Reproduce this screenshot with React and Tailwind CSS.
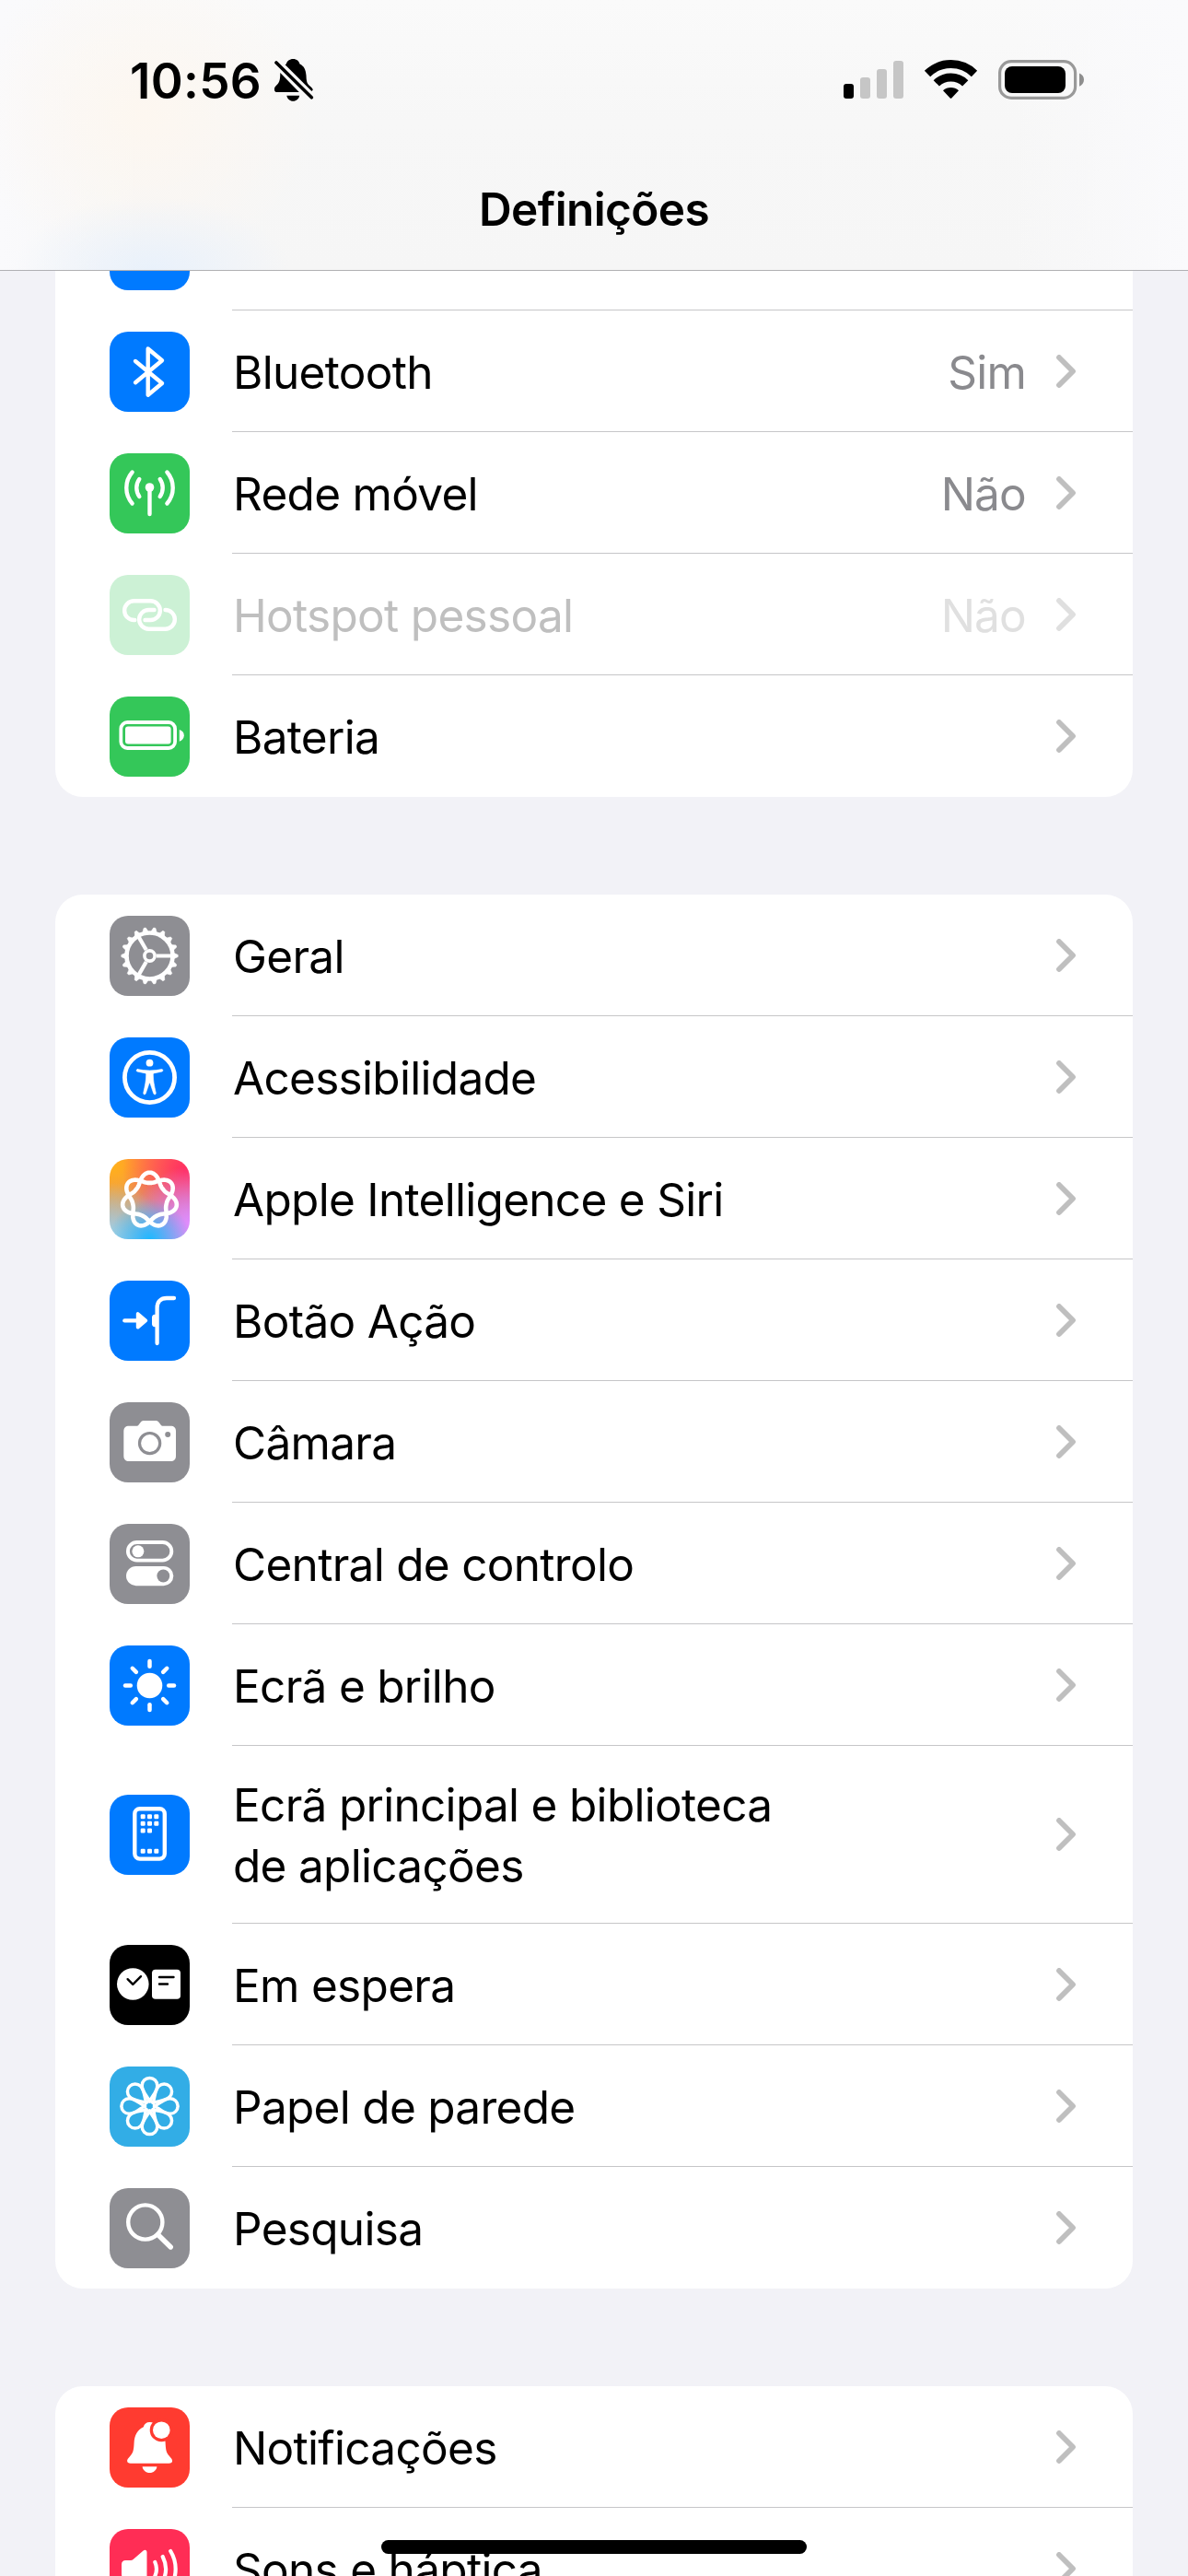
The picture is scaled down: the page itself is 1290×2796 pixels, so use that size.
import clsx from 'clsx';

// seven-lobed knot: the line goes round the centre twice
const knotPath = () => {
  const points = [];
  for (let i = 0; i < 360; i++) {
    const t = (i / 360) * Math.PI * 4;
    const r = 23.2 + 5.6 * Math.cos(3.5 * t) + 1.1 * Math.cos(7 * t);
    const a = t + 0.06 * Math.sin(3.5 * t);
    points.push(`${(43.5 + r * Math.sin(a)).toFixed(2)} ${(44.6 - r * Math.cos(a)).toFixed(2)}`);
  }
  return `M${points.join('L')}Z`;
};

const eighths = [0, 45, 90, 135, 180, 225, 270, 315];
const teeth = Array.from({ length: 18 }, (_, i) => i * 20);

const glyphs = {
  bluetooth: (
    <path d="M28 32 57 56 41.7 68.7V18.5L57 31.2 28 55.2" strokeWidth="4.4" />
  ),
  antenna: (
    <g strokeWidth="4.4">
      <circle cx="43.5" cy="37" r="4.8" fill="white" stroke="none" />
      <path d="M43.5 37V66" />
      <path d="M32.3 28a16.5 16.5 0 0 0 0 19M54.7 28a16.5 16.5 0 0 1 0 19" />
      <path d="M24.6 20.5a26 26 0 0 0 0 34M62.4 20.5a26 26 0 0 1 0 34" />
    </g>
  ),
  link: (
    <g strokeWidth="4.4">
      <path d="M27.3 49H26.5A10.35 10.35 0 0 1 26.5 28.3H44.5A10.35 10.35 0 0 1 44.5 49H38.5" />
      <path d="M60.5 38H60.5A10.35 10.35 0 0 1 60.5 58.7H42.5A10.35 10.35 0 0 1 42.5 38H48.5" />
    </g>
  ),
  battery: (
    <g>
      <rect x="12.3" y="28" width="58.8" height="28" rx="7" strokeWidth="3.8" />
      <rect x="17" y="32.6" width="49.6" height="18.8" rx="3" fill="white" stroke="none" />
      <path d="M75.8 36c3 .8 5 3.2 5 6.3s-2 5.6-5 6.4z" fill="white" stroke="none" />
    </g>
  ),
  gear: (
    <g>
      <circle cx="43.5" cy="43.5" r="25" strokeWidth="4.6" />
      <circle cx="43.5" cy="43.5" r="5.6" strokeWidth="3.6" />
      {[0, 120, 240].map(a => (
        <path key={a} d="M51 43.5H67" strokeWidth="4.2" strokeLinecap="butt" transform={`rotate(${a} 43.5 43.5)`} />
      ))}
      {teeth.map(a => (
        <path key={a} d="M69.5 40.3 74.2 42.4V44.6L69.5 46.7Z" fill="white" strokeWidth="0.6" transform={`rotate(${a} 43.5 43.5)`} />
      ))}
    </g>
  ),
  accessibility: (
    <g>
      <circle cx="43.5" cy="43.5" r="27.1" strokeWidth="4.8" />
      <circle cx="43.5" cy="27.7" r="3.9" fill="white" stroke="none" />
      <path
        d="M30.5 34.6C38 36.4 49 36.4 56.5 34.6 58 34.4 58.4 36.7 57 37.1L48.2 38.9C47.5 39.1 47.3 39.5 47.3 40.2 47.3 47 48.5 52 50.3 60.3 50.5 62.2 48.5 62.6 47.8 61L43.9 49.5H43.1L39.2 61C38.5 62.6 36.5 62.2 36.7 60.3 38.5 52 39.7 47 39.7 40.2 39.7 39.5 39.5 39.1 38.8 38.9L30 37.1C28.6 36.7 29 34.4 30.5 34.6Z"
        fill="white"
        strokeWidth="0.6"
      />
    </g>
  ),
  knot: <path d={knotPath()} strokeWidth="4.6" />,
  action: (
    <g strokeWidth="4.3">
      <path d="M16.3 43.4H31" />
      <path d="M30.6 36V50.8L39.4 43.4Z" fill="white" strokeWidth="3.6" />
      <path d="M51.6 68V29.5C51.6 23 55.5 19 62 19H70" />
      <path d="M50 36.7H49C47 36.7 46 38 46 40V47C46 49 47 50.2 49 50.2H50Z" fill="white" stroke="none" />
    </g>
  ),
  camera: (
    <g>
      <path
        d="M21.3 25.7H29C30.3 25.7 31 25.3 31.8 24.2L33.5 22C34.6 20.6 35.6 20 37.4 20H49.8C51.6 20 52.6 20.6 53.7 22L55.4 24.2C56.2 25.3 56.9 25.7 58.2 25.7H66C70 25.7 72 27.7 72 31.6V58C72 62 70 64 66 64H21.3C17.3 64 15.3 62 15.3 58V31.6C15.3 27.7 17.3 25.7 21.3 25.7Z"
        fill="white"
        stroke="none"
      />
      <circle cx="43.6" cy="44.6" r="11.1" stroke="#8e8e93" strokeWidth="3.2" />
      <circle cx="63.2" cy="34.9" r="3" fill="#8e8e93" stroke="none" />
    </g>
  ),
  toggles: (
    <g>
      <rect x="19.9" y="20" width="47.4" height="19.6" rx="9.8" strokeWidth="3.9" />
      <circle cx="30.9" cy="29.8" r="6.5" fill="white" stroke="none" />
      <rect x="18" y="46" width="51.3" height="21.2" rx="10.6" fill="white" stroke="none" />
      <circle cx="58.3" cy="56.5" r="6.9" fill="#8e8e93" stroke="none" />
    </g>
  ),
  sun: (
    <g>
      <circle cx="43.5" cy="43.5" r="13.8" fill="white" stroke="none" />
      {eighths.map(a => (
        <path key={a} d="M43.5 17V22.8" strokeWidth="4.5" transform={`rotate(${a} 43.5 43.5)`} />
      ))}
    </g>
  ),
  homescreen: (
    <g>
      <rect x="27.3" y="15.2" width="32.5" height="54.4" rx="5.5" strokeWidth="4.4" />
      {[[36.2, 23.7], [43.5, 23.7], [50.8, 23.7], [36.2, 31.3], [43.5, 31.3], [50.8, 31.3], [36.2, 39], [43.5, 39], [36.2, 61.3], [43.5, 61.3], [50.8, 61.3]].map(([x, y]) => (
        <rect key={`${x}-${y}`} x={x - 2.5} y={y - 2.5} width="5" height="5" rx="1.2" fill="white" stroke="none" />
      ))}
    </g>
  ),
  standby: (
    <g>
      <circle cx="25.3" cy="42.5" r="17.3" fill="white" stroke="none" />
      <path d="M19.6 37.2 25.3 42.8 34 34.2" stroke="black" strokeWidth="2.4" />
      <rect x="46" y="26.8" width="31" height="32" rx="3.8" fill="white" stroke="none" />
      <path d="M54 35H69.5M54 42.5H63" stroke="black" strokeWidth="2.4" />
    </g>
  ),
  flower: (
    <g strokeWidth="3.5">
      {eighths.map(a => (
        <path
          key={a}
          d="M43.5 38C41 32 35.2 27.5 35.2 20.7A8.3 8.3 0 0 1 51.8 20.7C51.8 27.5 46 32 43.5 38"
          transform={`rotate(${a} 43.5 43)`}
        />
      ))}
      <circle cx="43.5" cy="43" r="5" strokeWidth="2.4" />
    </g>
  ),
  search: (
    <g>
      <circle cx="38.8" cy="37" r="18.6" strokeWidth="4.4" />
      <path d="M52.5 50.5 66.3 64" strokeWidth="5.4" />
    </g>
  ),
  bell: (
    <g stroke="none" fill="white">
      <path d="M43.6 16C40 16 37.5 18 36.8 21.2 30.5 24 27 30 26.6 38 26.2 47 25.5 49 22.6 52.5 20 55.5 19.1 56.6 19.1 58 19.1 60 20.5 60.7 22.7 60.7H64.5C66.7 60.7 68.1 60 68.1 58 68.1 56.6 67.2 55.5 64.6 52.5 61.7 49 61 47 60.6 38 60.2 30 56.7 24 50.4 21.2 49.7 18 47.2 16 43.6 16Z" />
      <path d="M35.6 64.2H51.4C51 68 47.6 71 43.5 71S36 68 35.6 64.2Z" />
      <circle cx="56.3" cy="24.7" r="12.6" fill="#ff3b30" />
      <circle cx="56.3" cy="24.7" r="9.3" />
    </g>
  ),
  speaker: (
    <g strokeWidth="4.2">
      <path d="M17.5 34H23C24 34 24.8 33.7 25.6 33L36 24C38.5 22 40.5 22.7 40.5 25.5V62C40.5 64.5 38.5 65.5 36 63.5L25.6 54.5C24.8 53.8 24 53.5 23 53.5H17.5C14.5 53.5 13 52 13 49V38.5C13 35.5 14.5 34 17.5 34Z" fill="white" stroke="none" />
      <path d="M49.3 36C51.3 40.5 51.3 46.5 49.3 51M57.7 30C62 38.5 62 48.5 57.7 57M66.2 24C73.5 36 73.5 51 66.2 63" />
    </g>
  ),
};

const groups = [
  [
    { label: 'Bluetooth', icon: 'bluetooth', bg: 'bg-[#007aff]', value: 'Sim' },
    { label: 'Rede móvel', icon: 'antenna', bg: 'bg-[#34c759]', value: 'Não' },
    { label: 'Hotspot pessoal', icon: 'link', bg: 'bg-[#ccf1d5]', value: 'Não', disabled: true },
    { label: 'Bateria', icon: 'battery', bg: 'bg-[#34c759]' },
  ],
  [
    { label: 'Geral', icon: 'gear', bg: 'bg-[#8e8e93]' },
    { label: 'Acessibilidade', icon: 'accessibility', bg: 'bg-[#007aff]' },
    {
      label: 'Apple Intelligence e Siri',
      icon: 'knot',
      bg: 'bg-[radial-gradient(circle_at_50%_100%,#1fb8ff_0%,#1fb8ff00_45%),radial-gradient(circle_at_100%_80%,#e08cff_0%,#e08cff00_55%),radial-gradient(circle_at_0%_100%,#a0d4e6_0%,#a0d4e600_50%),radial-gradient(circle_at_95%_15%,#ff2d62_0%,#ff2d6200_62%),radial-gradient(circle_at_5%_10%,#ffb01c_0%,#ffb01c00_70%),linear-gradient(#ff7a58_10%,#c090a4_50%,#a8a8d0)]',
    },
    { label: 'Botão Ação', icon: 'action', bg: 'bg-[#007aff]' },
    { label: 'Câmara', icon: 'camera', bg: 'bg-[#8e8e93]' },
    { label: 'Central de controlo', icon: 'toggles', bg: 'bg-[#8e8e93]' },
    { label: 'Ecrã e brilho', icon: 'sun', bg: 'bg-[#007aff]' },
    { label: 'Ecrã principal e biblioteca de aplicações', icon: 'homescreen', bg: 'bg-[#007aff]', tall: true },
    { label: 'Em espera', icon: 'standby', bg: 'bg-black' },
    { label: 'Papel de parede', icon: 'flower', bg: 'bg-[#32ade6]' },
    { label: 'Pesquisa', icon: 'search', bg: 'bg-[#8e8e93]' },
  ],
  [
    { label: 'Notificações', icon: 'bell', bg: 'bg-[#ff3b30]' },
    { label: 'Sons e háptica', icon: 'speaker', bg: 'bg-[#ff2d55]' },
  ],
];

const Chevron = ({ disabled }) => (
  <svg width="21" height="36" viewBox="0 0 21 36" fill="none" className={disabled ? 'text-[#dfdfdf]' : 'text-[#bfbfbf]'}>
    <path d="M3 3 18 18 3 33" stroke="currentColor" strokeWidth="5.8" strokeLinecap="round" strokeLinejoin="round" />
  </svg>
);

const Row = ({ item, last }) => (
  <div className={clsx('flex pl-[59px]', item.tall ? 'h-[193px]' : 'h-[132px]')}>
    <div className={clsx('flex items-center', !item.tall && 'pt-px')}>
      <div className={clsx('w-[87px] h-[87px] rounded-[20px] overflow-hidden', item.bg)}>
        <svg width="87" height="87" viewBox="0 0 87 87" fill="none" stroke="white" strokeLinecap="round" strokeLinejoin="round">
          {glyphs[item.icon]}
        </svg>
      </div>
    </div>
    <div className={clsx('flex flex-1 items-center ml-[46px] pr-[62px] border-b', last ? 'border-transparent' : 'border-[#c6c6c8]')}>
      <span
        className={clsx(
          'text-[49.5px] leading-[66px] tracking-[-0.7px] pl-px',
          item.disabled ? 'text-[#bfbfbf]' : 'text-black',
          item.tall ? 'w-[640px] pt-[2px]' : 'whitespace-nowrap pt-[2px]'
        )}
      >
        {item.label}
      </span>
      <div className="ml-auto flex items-center gap-[33px]">
        {item.value && (
          <span className={clsx('text-[49.5px] leading-[66px] tracking-[-0.8px] pt-[2px]', item.disabled ? 'text-[#e0e0e0]' : 'text-[#8a8a8e]')}>
            {item.value}
          </span>
        )}
        <Chevron disabled={item.disabled} />
      </div>
    </div>
  </div>
);

const StatusIcons = () => (
  <svg width="262" height="44" viewBox="916 65 262 44" fill="none">
    <rect x="916" y="91" width="11" height="16" rx="3" fill="black" />
    <rect x="934" y="84" width="11" height="23" rx="3" fill="#c6c6c6" />
    <rect x="952" y="75" width="11" height="32" rx="3" fill="#c6c6c6" />
    <rect x="970" y="66" width="11" height="41" rx="3" fill="#c6c6c6" />
    <g stroke="black" strokeWidth="9">
      <path d="M1007 80A36.5 36.5 0 0 1 1058 80" />
      <path d="M1016.8 90.4A22.5 22.5 0 0 1 1048.2 90.4" />
    </g>
    <path d="M1024 98.3A12.5 12.5 0 0 1 1041 98.3L1033.3 106.4Q1032.5 107.2 1031.7 106.4Z" fill="black" />
    <rect x="1085.6" y="66.6" width="82" height="39.8" rx="12.5" stroke="#999999" strokeWidth="3.2" />
    <rect x="1091" y="72" width="66" height="29" rx="8" fill="black" />
    <path d="M1172 79.5C1175.2 80.8 1177 83.5 1177 86.6S1175.2 92.4 1172 93.7Z" fill="#8e8e8e" />
  </svg>
);

const MutedBell = () => (
  <svg width="43" height="46" viewBox="298 65 43 46" fill="none">
    <path d="M318.3 65C314.3 65 311.8 67.300 310.8 70.500L309.600 71.300 338.500 100 339.800 98.600C339.500 96.500 337.500 95.500 335.500 93.500 333 91 332.700 88 332.500 83 332 76.500 330 72.500 325.500 70.500 324.500 67.300 322.300 65 318.300 65Z" fill="black" />
    <path d="M304.300 80 324.800 101H301C298.500 101 297.800 99.500 297.900 97.500 298 95.500 299.500 94.300 301 92.700 303.800 90 304.200 86.500 304.300 80Z" fill="black" />
    <path d="M311.300 104.700H325.200C324.500 108.300 321.800 110.700 318.200 110.700S312 108.300 311.300 104.700Z" fill="black" />
    <path d="M300 69 338.300 106.800" stroke="black" strokeWidth="3.600" strokeLinecap="round" />
  </svg>
);

const Header = () => (
  <header className="shrink-0 h-[294px] flex flex-col border-b border-[#b0b0b3] bg-[radial-gradient(ellipse_150px_80px_at_165px_293px,#e9f1fb_0%,#e9f1fb00_100%),radial-gradient(ellipse_190px_170px_at_155px_125px,#fdf7f0_0%,#fdf7f000_100%),linear-gradient(90deg,#fafafc_0%,#fafafc00_12%,#fafafc00_85%,#fafafc_100%),linear-gradient(180deg,#fafafa_0%,#f7f7f7_45%,#f6f6f6_100%)]">
    <div className="h-[174px] shrink-0 flex items-center pl-[141px] pr-[112px]">
      <span className="w-[157px] text-[53px] leading-[60px] pt-px font-semibold tracking-[0.3px] whitespace-nowrap">10:56</span>
      <MutedBell />
      <div className="ml-auto">
        <StatusIcons />
      </div>
    </div>
    <h1 className="text-center text-[49.5px] leading-[106px] font-semibold tracking-[-0.6px]">Definições</h1>
  </header>
);

const App = () => (
  <div className="relative w-[1290px] h-[2796px] overflow-hidden flex flex-col bg-[#f2f2f7] text-black font-['Inter','Liberation_Sans',sans-serif]">
    <Header />
    <main className="flex flex-col gap-[106px] px-[60px]">
      {groups.map((items, i) => (
        <section key={i} className={clsx('bg-white overflow-hidden', i === 0 ? 'rounded-b-[30px]' : 'rounded-[30px]')}>
          {/* tail of the row scrolled under the header */}
          {i === 0 && (
            <div className="h-[43px] pl-[59px] flex">
              <div className="w-[87px] h-[21px] bg-[#007aff] rounded-b-[20px]" />
              <div className="flex-1 ml-[46px] border-b border-[#c6c6c8]" />
            </div>
          )}
          {items.map((item, n) => (
            <Row key={item.label} item={item} last={n === items.length - 1} />
          ))}
        </section>
      ))}
    </main>
    {/* home indicator */}
    <div className="absolute left-[414px] top-[2757px] w-[462px] h-[15px] rounded-full bg-black" />
  </div>
);

export default App;
